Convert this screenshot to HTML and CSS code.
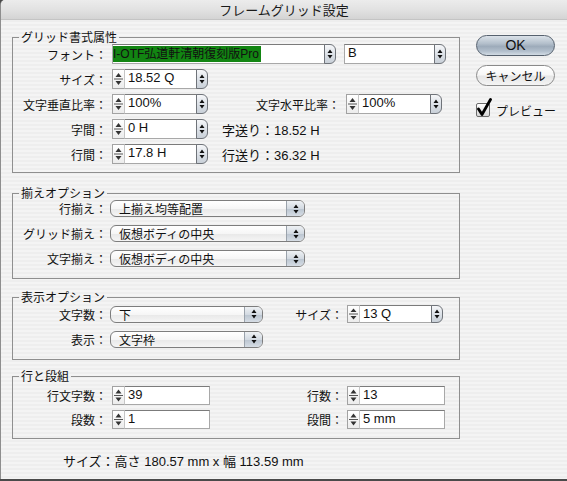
FILE: index.html
```html
<!DOCTYPE html>
<html lang="ja">
<head>
<meta charset="utf-8">
<title>フレームグリッド設定</title>
<link rel="stylesheet" href="styles.css">
</head>
<body>
<div class="window">
  <div class="titlebar">フレームグリッド設定</div>
  <div class="content">
    <div class="main">
      <fieldset class="group g1">
        <legend>グリッド書式属性</legend>
        <div class="row">
          <span class="lbl">フォント：</span>
          <div class="combo ml5">
            <span class="field font-field"><span class="sel">I-OTF弘道軒清朝復刻版Pro</span></span>
            <span class="arrows"><svg width="6" height="12" viewBox="0 0 6 12"><path d="M3 1.5 L5.5 5 L0.5 5Z M0.5 7 L5.5 7 L3 10.5Z" fill="#111"/></svg></span>
          </div>
          <div class="combo ml8">
            <span class="field w91">B</span>
            <span class="arrows"><svg width="6" height="12" viewBox="0 0 6 12"><path d="M3 1.5 L5.5 5 L0.5 5Z M0.5 7 L5.5 7 L3 10.5Z" fill="#111"/></svg></span>
          </div>
        </div>
        <div class="row">
          <span class="lbl">サイズ：</span>
          <div class="combo ml5">
            <span class="stepper"><svg width="11" height="18" viewBox="0 0 11 18"><path d="M5.5 3 L8.5 7 L2.5 7Z M2.5 11 L8.5 11 L5.5 15Z" fill="#333"/><path d="M1 9 H10" stroke="#555" stroke-width="1"/></svg></span>
            <span class="field w72">18.52 Q</span>
            <span class="arrows"><svg width="6" height="12" viewBox="0 0 6 12"><path d="M3 1.5 L5.5 5 L0.5 5Z M0.5 7 L5.5 7 L3 10.5Z" fill="#111"/></svg></span>
          </div>
        </div>
        <div class="row">
          <span class="lbl">文字垂直比率：</span>
          <div class="combo ml5">
            <span class="stepper"><svg width="11" height="18" viewBox="0 0 11 18"><path d="M5.5 3 L8.5 7 L2.5 7Z M2.5 11 L8.5 11 L5.5 15Z" fill="#333"/><path d="M1 9 H10" stroke="#555" stroke-width="1"/></svg></span>
            <span class="field w72">100%</span>
            <span class="arrows"><svg width="6" height="12" viewBox="0 0 6 12"><path d="M3 1.5 L5.5 5 L0.5 5Z M0.5 7 L5.5 7 L3 10.5Z" fill="#111"/></svg></span>
          </div>
          <span class="lbl2 w132">文字水平比率：</span>
          <div class="combo ml6">
            <span class="stepper"><svg width="11" height="18" viewBox="0 0 11 18"><path d="M5.5 3 L8.5 7 L2.5 7Z M2.5 11 L8.5 11 L5.5 15Z" fill="#333"/><path d="M1 9 H10" stroke="#555" stroke-width="1"/></svg></span>
            <span class="field w72">100%</span>
            <span class="arrows"><svg width="6" height="12" viewBox="0 0 6 12"><path d="M3 1.5 L5.5 5 L0.5 5Z M0.5 7 L5.5 7 L3 10.5Z" fill="#111"/></svg></span>
          </div>
        </div>
        <div class="row">
          <span class="lbl">字間：</span>
          <div class="combo ml5">
            <span class="stepper"><svg width="11" height="18" viewBox="0 0 11 18"><path d="M5.5 3 L8.5 7 L2.5 7Z M2.5 11 L8.5 11 L5.5 15Z" fill="#333"/><path d="M1 9 H10" stroke="#555" stroke-width="1"/></svg></span>
            <span class="field w72">0 H</span>
            <span class="arrows"><svg width="6" height="12" viewBox="0 0 6 12"><path d="M3 1.5 L5.5 5 L0.5 5Z M0.5 7 L5.5 7 L3 10.5Z" fill="#111"/></svg></span>
          </div>
          <span class="info">字送り：18.52 H</span>
        </div>
        <div class="row">
          <span class="lbl">行間：</span>
          <div class="combo ml5">
            <span class="stepper"><svg width="11" height="18" viewBox="0 0 11 18"><path d="M5.5 3 L8.5 7 L2.5 7Z M2.5 11 L8.5 11 L5.5 15Z" fill="#333"/><path d="M1 9 H10" stroke="#555" stroke-width="1"/></svg></span>
            <span class="field w72">17.8 H</span>
            <span class="arrows"><svg width="6" height="12" viewBox="0 0 6 12"><path d="M3 1.5 L5.5 5 L0.5 5Z M0.5 7 L5.5 7 L3 10.5Z" fill="#111"/></svg></span>
          </div>
          <span class="info">行送り：36.32 H</span>
        </div>
      </fieldset>

      <fieldset class="group g2">
        <legend>揃えオプション</legend>
        <div class="row prow">
          <span class="lbl">行揃え：</span>
          <div class="popup w195 ml3"><span class="ptext">上揃え均等配置</span><span class="parrow"><svg width="6" height="12" viewBox="0 0 6 12"><path d="M3 1.5 L5.5 5 L0.5 5Z M0.5 7 L5.5 7 L3 10.5Z" fill="#111"/></svg></span></div>
        </div>
        <div class="row prow">
          <span class="lbl">グリッド揃え：</span>
          <div class="popup w195 ml3"><span class="ptext">仮想ボディの中央</span><span class="parrow"><svg width="6" height="12" viewBox="0 0 6 12"><path d="M3 1.5 L5.5 5 L0.5 5Z M0.5 7 L5.5 7 L3 10.5Z" fill="#111"/></svg></span></div>
        </div>
        <div class="row prow">
          <span class="lbl">文字揃え：</span>
          <div class="popup w195 ml3"><span class="ptext">仮想ボディの中央</span><span class="parrow"><svg width="6" height="12" viewBox="0 0 6 12"><path d="M3 1.5 L5.5 5 L0.5 5Z M0.5 7 L5.5 7 L3 10.5Z" fill="#111"/></svg></span></div>
        </div>
      </fieldset>

      <fieldset class="group g3">
        <legend>表示オプション</legend>
        <div class="row r18">
          <span class="lbl">文字数：</span>
          <div class="popup w153 ml3"><span class="ptext">下</span><span class="parrow"><svg width="6" height="12" viewBox="0 0 6 12"><path d="M3 1.5 L5.5 5 L0.5 5Z M0.5 7 L5.5 7 L3 10.5Z" fill="#111"/></svg></span></div>
          <span class="lbl2 w80">サイズ：</span>
          <div class="combo ml4 h18">
            <span class="stepper"><svg width="11" height="16" viewBox="0 0 11 16"><path d="M5.5 2.5 L8.5 6 L2.5 6Z M2.5 10 L8.5 10 L5.5 13.5Z" fill="#333"/><path d="M1 8 H10" stroke="#555" stroke-width="1"/></svg></span>
            <span class="field w72">13 Q</span>
            <span class="arrows"><svg width="6" height="12" viewBox="0 0 6 12"><path d="M3 1.5 L5.5 5 L0.5 5Z M0.5 7 L5.5 7 L3 10.5Z" fill="#111"/></svg></span>
          </div>
        </div>
        <div class="row r18">
          <span class="lbl">表示：</span>
          <div class="popup w153 ml3"><span class="ptext">文字枠</span><span class="parrow"><svg width="6" height="12" viewBox="0 0 6 12"><path d="M3 1.5 L5.5 5 L0.5 5Z M0.5 7 L5.5 7 L3 10.5Z" fill="#111"/></svg></span></div>
        </div>
      </fieldset>

      <fieldset class="group g4">
        <legend>行と段組</legend>
        <div class="row r19">
          <span class="lbl">行文字数：</span>
          <div class="combo ml5 h19">
            <span class="stepper"><svg width="11" height="17" viewBox="0 0 11 17"><path d="M5.5 2.5 L8.5 6.5 L2.5 6.5Z M2.5 10.5 L8.5 10.5 L5.5 14.5Z" fill="#333"/><path d="M1 8.5 H10" stroke="#555" stroke-width="1"/></svg></span>
            <span class="field w85">39</span>
          </div>
          <span class="lbl2 w133">行数：</span>
          <div class="combo ml4 h19">
            <span class="stepper"><svg width="11" height="17" viewBox="0 0 11 17"><path d="M5.5 2.5 L8.5 6.5 L2.5 6.5Z M2.5 10.5 L8.5 10.5 L5.5 14.5Z" fill="#333"/><path d="M1 8.5 H10" stroke="#555" stroke-width="1"/></svg></span>
            <span class="field w85">13</span>
          </div>
        </div>
        <div class="row r19">
          <span class="lbl">段数：</span>
          <div class="combo ml5 h19">
            <span class="stepper"><svg width="11" height="17" viewBox="0 0 11 17"><path d="M5.5 2.5 L8.5 6.5 L2.5 6.5Z M2.5 10.5 L8.5 10.5 L5.5 14.5Z" fill="#333"/><path d="M1 8.5 H10" stroke="#555" stroke-width="1"/></svg></span>
            <span class="field w85">1</span>
          </div>
          <span class="lbl2 w133">段間：</span>
          <div class="combo ml4 h19">
            <span class="stepper"><svg width="11" height="17" viewBox="0 0 11 17"><path d="M5.5 2.5 L8.5 6.5 L2.5 6.5Z M2.5 10.5 L8.5 10.5 L5.5 14.5Z" fill="#333"/><path d="M1 8.5 H10" stroke="#555" stroke-width="1"/></svg></span>
            <span class="field w85">5 mm</span>
          </div>
        </div>
      </fieldset>

      <div class="summary">サイズ：高さ 180.57 mm x 幅 113.59 mm</div>
    </div>

    <div class="side">
      <div class="btn btn-default">OK</div>
      <div class="btn btn-cancel">キャンセル</div>
      <div class="preview">
        <span class="check"><svg class="tick" width="18" height="20" viewBox="0 0 18 20"><path d="M3.5 11 L7 16.5 L15.5 1.5" fill="none" stroke="#000" stroke-width="2.8" stroke-linecap="round" stroke-linejoin="round"/></svg></span>
        <span class="ptxt">プレビュー</span>
      </div>
    </div>
  </div>
</div>
</body>
</html>
```

FILE: styles.css
```css
html, body {
  margin: 0;
  padding: 0;
  background: #4a4a4a;
}

.window {
  width: 567px;
  height: 479px;
  box-sizing: border-box;
  border-left: 1px solid #8e8e8e;
  background: repeating-linear-gradient(to bottom, #eeeeee 0, #eeeeee 2px, #f4f4f4 2px, #f4f4f4 4px);
  font-family: "Noto Sans CJK JP", "Liberation Sans", sans-serif;
  font-size: 12px;
  color: #111;
  border-top-left-radius: 5px;
  overflow: hidden;
}

.titlebar {
  height: 20px;
  line-height: 20px;
  text-align: center;
  font-size: 13px;
  color: #1a1a1a;
  background: linear-gradient(to bottom, #ececec 0%, #e2e2e2 50%, #d4d4d4 100%);
  border-bottom: 1px solid #c4c4c4;
  box-sizing: border-box;
}

.content {
  display: flex;
  padding: 10px 0 0 11px;
  gap: 16px;
}

.main {
  width: 448px;
  display: flex;
  flex-direction: column;
}

.group {
  margin: 0;
  padding: 0;
  border: 1px solid #8f8f8f;
  width: 448px;
  box-sizing: border-box;
  min-width: 0;
  display: flex;
  flex-direction: column;
}

.group legend {
  font-size: 12px;
  line-height: 14px;
  padding: 0 2px;
  margin-left: 6px;
  color: #111;
}

.g1 { gap: 5px; padding-bottom: 8px; }
.g2 { margin-top: 13px; gap: 8px; padding-bottom: 11px; }
.g3 { margin-top: 11px; gap: 7px; padding-top: 1px; padding-bottom: 11px; }
.g4 { margin-top: 9px; gap: 5px; padding-top: 3px; padding-bottom: 9px; }

.row {
  display: flex;
  align-items: center;
  height: 20px;
}
.prow { height: 17px; }
.r18 { height: 18px; }
.r19 { height: 19px; }

.lbl {
  width: 94px;
  text-align: right;
  white-space: nowrap;
  flex: none;
}

.lbl2 {
  text-align: right;
  white-space: nowrap;
  flex: none;
}
.w132 { width: 132px; }
.w80 { width: 80px; }
.w133 { width: 133px; }

.ml3 { margin-left: 3px; }
.ml4 { margin-left: 4px; }
.ml5 { margin-left: 5px; }
.ml6 { margin-left: 6px; }
.ml8 { margin-left: 8px; }

.info {
  margin-left: 14px;
  white-space: nowrap;
  font-family: "Liberation Sans", "Noto Sans CJK JP", sans-serif;
  font-size: 13px;
}

.combo {
  display: flex;
  height: 20px;
  flex: none;
}
.combo.h18 { height: 18px; }
.combo.h19 { height: 19px; }

.stepper {
  width: 13px;
  box-sizing: border-box;
  border: 1px solid #a2a2a2;
  border-right: 1px solid #c6c6c6;
  background: linear-gradient(to bottom, #ffffff, #ececec);
  display: flex;
  align-items: center;
  justify-content: center;
}

.field {
  box-sizing: border-box;
  height: 100%;
  background: #fff;
  border: 1px solid #a8a8a8;
  border-top-color: #7b7b7b;
  border-left: none;
  padding: 0 3px;
  font-family: "Liberation Sans", "Noto Sans CJK JP", sans-serif;
  font-size: 13px;
  line-height: 15px;
  white-space: nowrap;
  overflow: hidden;
}
.w72 { width: 72px; }
.w85 { width: 85px; }
.w91 { width: 91px; border-left: 1px solid #a8a8a8; }

.font-field {
  width: 213px;
  border-left: 1px solid #a8a8a8;
  padding: 1px 0 0 0;
}
.sel {
  display: inline-block;
  background: #128512;
  color: #111;
  font-size: 12px;
  line-height: 16px;
  padding: 0 2px 0 0;
}

.arrows {
  width: 12px;
  box-sizing: border-box;
  border: 1px solid #6f7379;
  border-radius: 0 6px 6px 0;
  background: linear-gradient(to bottom, #f6f7f9 0%, #dde2e8 50%, #c9d0d8 100%);
  display: flex;
  align-items: center;
  justify-content: center;
  margin-left: -1px;
}

.popup {
  height: 17px;
  box-sizing: border-box;
  border: 1px solid #7d7d7d;
  border-radius: 6px;
  background: linear-gradient(to bottom, #ffffff 0%, #f6f6f6 50%, #e9e9e9 55%, #f5f5f5 100%);
  display: flex;
  align-items: center;
  flex: none;
  overflow: hidden;
}
.w195 { width: 195px; }
.w153 { width: 153px; }

.ptext {
  flex: 1;
  padding-left: 8px;
  font-size: 12px;
  line-height: 15px;
  white-space: nowrap;
}

.parrow {
  width: 18px;
  height: 100%;
  box-sizing: border-box;
  border-left: 1px solid #9aa2ab;
  background: linear-gradient(to bottom, #eef1f4 0%, #d3dae2 50%, #bcc6d1 55%, #d6dde5 100%);
  display: flex;
  align-items: center;
  justify-content: center;
}

.summary {
  margin-top: 15px;
  line-height: 16px;
  padding-left: 51px;
  white-space: nowrap;
  font-family: "Liberation Sans", "Noto Sans CJK JP", sans-serif;
  font-size: 13px;
}

.side {
  width: 79px;
  display: flex;
  flex-direction: column;
  padding-top: 5px;
}

.btn {
  height: 21px;
  box-sizing: border-box;
  border-radius: 11px;
  text-align: center;
  line-height: 19px;
}

.btn-default {
  border: 1px solid #56616e;
  background: linear-gradient(to bottom, #dbe2e9 0%, #b3bfcb 40%, #9dabba 55%, #b2bfcc 80%, #d2dbe4 100%);
  font-family: "Liberation Sans", sans-serif;
  font-size: 14px;
  color: #111;
}

.btn-cancel {
  margin-top: 9px;
  border: 1px solid #8a8a8a;
  background: linear-gradient(to bottom, #ffffff 0%, #f7f7f7 45%, #e6e6e6 55%, #f4f4f4 100%);
  font-size: 12px;
}

.preview {
  margin-top: 16px;
  display: flex;
  align-items: center;
  height: 16px;
}

.check {
  position: relative;
  width: 14px;
  height: 14px;
  box-sizing: border-box;
  border: 1px solid #6b6b6b;
  border-radius: 2px;
  background: linear-gradient(to bottom, #ffffff, #d6d6d6);
  flex: none;
}
.tick {
  position: absolute;
  left: -2px;
  top: -6px;
}

.ptxt {
  margin-left: 6px;
  font-size: 12px;
  white-space: nowrap;
}
```
